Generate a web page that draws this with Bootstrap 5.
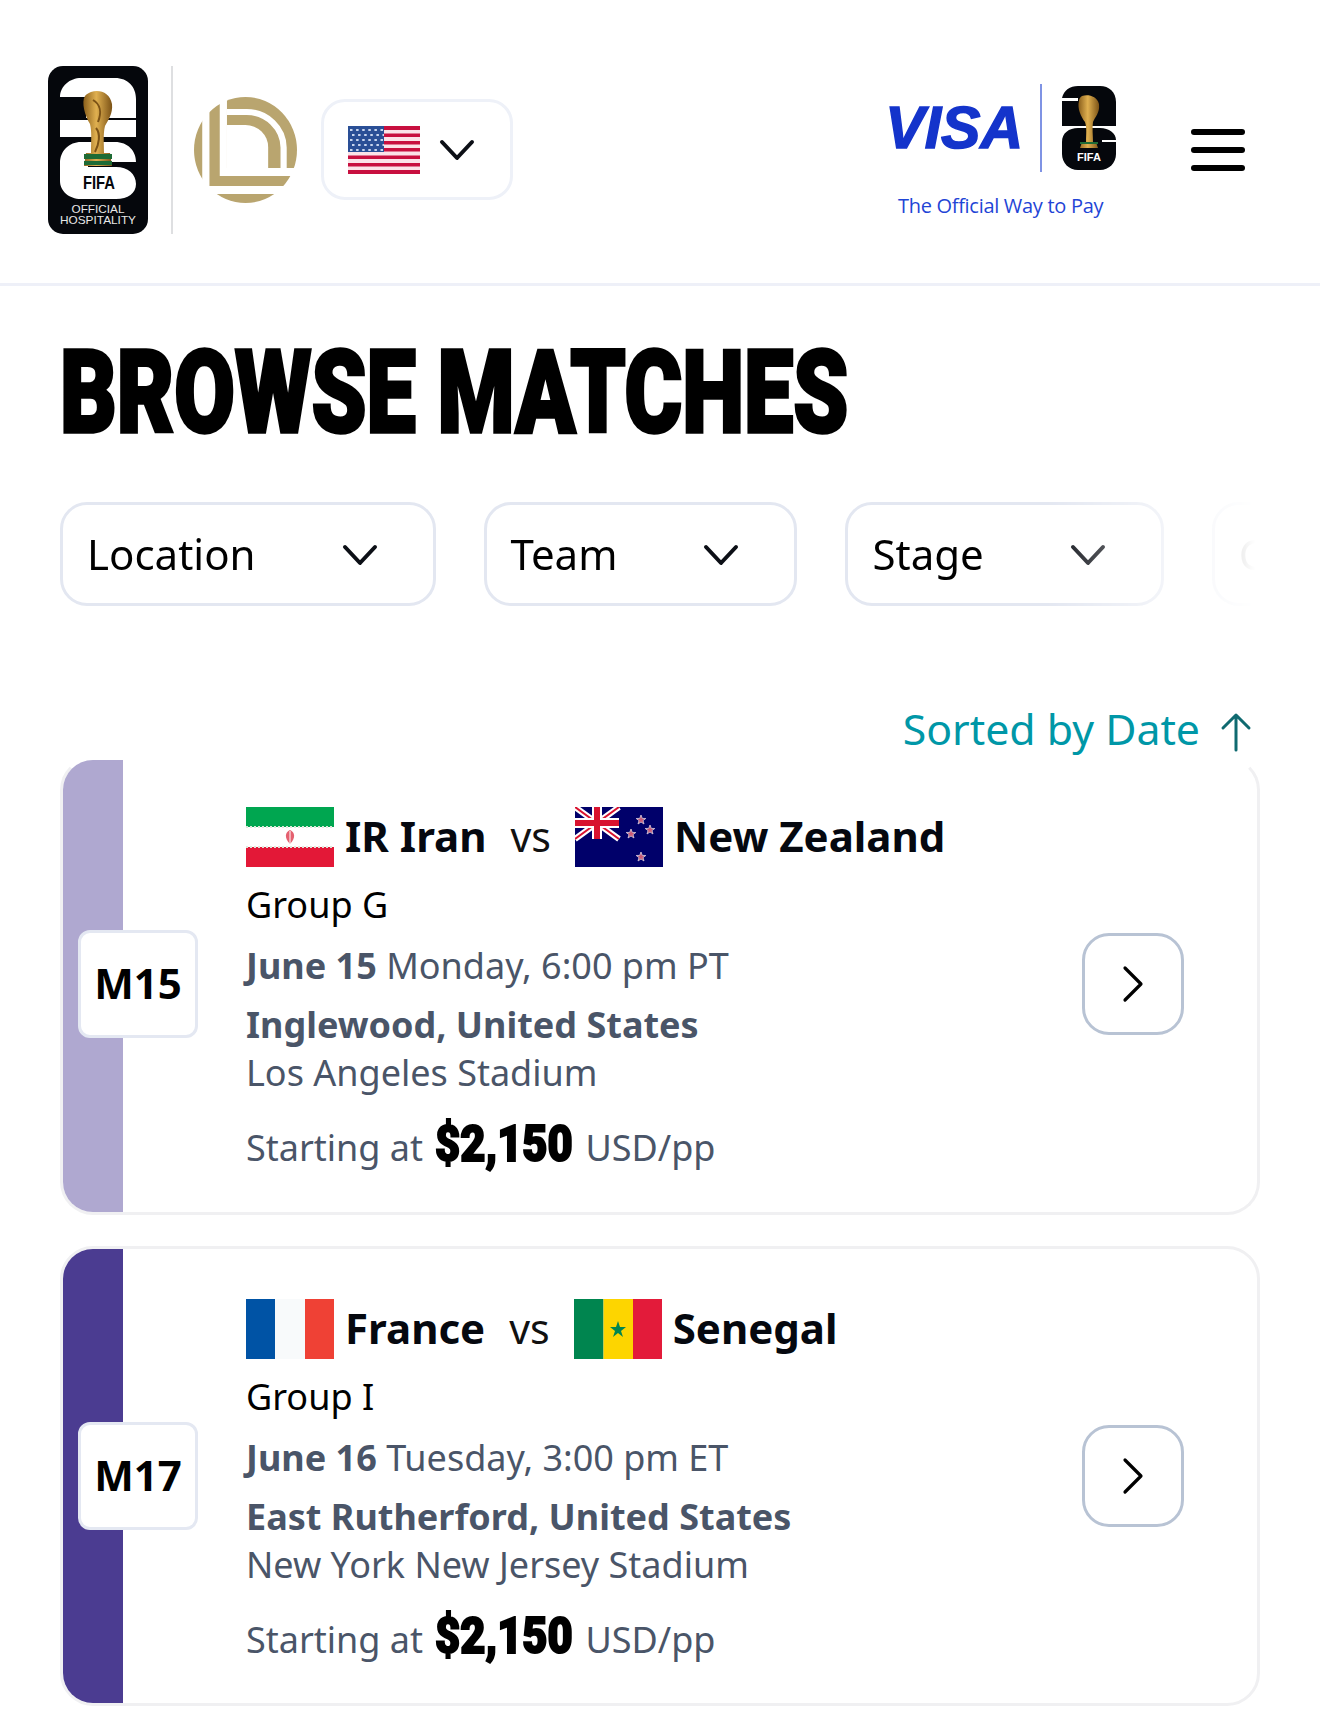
<!DOCTYPE html>
<html lang="en">
<head>
  <meta charset="UTF-8">
  <meta name="viewport" content="width=device-width, initial-scale=1.0">
  <title>Browse Matches</title>
  <link href="https://cdn.jsdelivr.net/npm/bootstrap@5.3.0/dist/css/bootstrap.min.css" rel="stylesheet">
  <style>
    body { background: #fff; color: #000; font-family: "Noto Sans", sans-serif; overflow: hidden; }
    .site-head { height: 286px; border-bottom: 3px solid #eef0f8; padding: 66px 75px 0 48px; }
    .hosp-logo { width: 100px; height: 168px; display: block; }
    .head-rule { width: 2px; height: 168px; background: #dedfe1; margin: 0 21px 0 23px; }
    .gold-logo { width: 103px; height: 106px; margin-top: 31px; display: block; }
    .lang-btn { width: 192px; height: 101px; margin: 33px 0 0 24px; border: 3px solid #eef1f8; border-radius: 24px; padding: 0 35px 0 24px; background: #fff; }
    .visa-box { width: 240px; margin-right: 69px; }
    .visa-top { height: 88px; margin-top: 18px; }
    .visa-word { font: italic 700 59px/88px "Liberation Sans", sans-serif; color: #1434cb; -webkit-text-stroke: 1.5px #1434cb; width: 158px; text-align: right; padding-right: 17px; }
    .visa-rule { width: 2px; height: 88px; background: #7f93e4; margin-right: 20px; }
    .visa-tag { font: 400 20px/24px "Open Sans", sans-serif; color: #1f45d6; letter-spacing: -.3px; margin: 22px 0 0 16px; white-space: nowrap; }
    .menu-btn { width: 54px; height: 42px; margin-top: 63px; padding: 0; border: 0; background: none; }
    .menu-btn span { display: block; height: 6px; border-radius: 3px; background: #000; }

    .page-title { margin: 49px 0 0 60px; font: 900 115px/115px Roboto, sans-serif; -webkit-text-stroke: 3.5px #000; transform: scaleX(.765); transform-origin: left; white-space: nowrap; }
    .filter-strip { margin: 52px 65px 0 20px; padding-left: 40px; overflow: hidden; -webkit-mask-image: linear-gradient(to right, transparent 0, #000 40px, #000 83%, transparent 100%); mask-image: linear-gradient(to right, transparent 0, #000 40px, #000 83%, transparent 100%); }
    .filter-btn { flex-shrink: 0; height: 104px; padding: 0 55px 2px 24px; border: 3px solid #e3e7f1; border-radius: 27px; background: #fff; font-size: 42px; color: #000; gap: 86px; }
    .filter-btn svg { margin-top: 3px; }
    .sort-row { margin: 95px 68px 0 0; height: 56px; font-size: 42.8px; line-height: 54px; color: #0097a7; gap: 20px; }
    .sort-row svg { margin-top: 5px; }

    .match-box { margin: 0 60px; border: 3px solid #f0f0f2; border-radius: 33px; overflow: hidden; position: relative; background: #fff; padding: 50px 72px 0 183px; }
    .match-box + .match-box { margin-top: 31px; }
    .match-one { border-top-color: #fff; height: 458px; padding-top: 47px; }
    .match-one .match-no, .match-one .go-btn { margin-top: -2px; }
    .match-two { height: 460px; }
    .side-bar { position: absolute; left: 0; top: 0; bottom: 0; width: 60px; }
    .bar-light { background: #afa8d0; }
    .bar-dark { background: #4b3c91; }
    .match-no { position: absolute; left: 15px; width: 120px; height: 108px; background: #fff; border: 3px solid #e4e8f2; border-radius: 12px; font-size: 42px; font-weight: 700; line-height: 100px; text-align: center; }
    .flag-art { width: 88px; height: 60px; display: block; flex-shrink: 0; }
    .team-row { height: 60px; font-size: 42px; font-weight: 700; color: #05080f; }
    .team-row .vs-word { font-size: 41px; font-weight: 400; margin: 0 24px 0 24px; color: #111; }
    .team-row b { margin: 0 0 4px 11px; font-weight: 700; }
    .group-line { margin-top: 13px; font-size: 36px; line-height: 50px; }
    .info-line { font-size: 36px; line-height: 48px; color: #4a5568; }
    .date-line { margin-top: 11px; line-height: 50px; }
    .place-line { margin-top: 10px; }
    .price-line { margin-top: 19px; line-height: 56px; }
    .price-tag { display: inline-block; font: 900 50px/56px Roboto, sans-serif; font-variant-numeric: slashed-zero; color: #000; -webkit-text-stroke: 2px #000; transform: scaleX(.87); transform-origin: left; width: 150px; margin-left: 3px; }
    .go-btn { width: 102px; height: 102px; border: 3px solid #b8c3d4; border-radius: 27px; background: #fff; position: absolute; right: 73px; padding: 0; }
  </style>
</head>
<body>

  <header class="site-head d-flex justify-content-between">
    <div class="d-flex align-items-start">
      <svg class="hosp-logo" viewBox="0 0 100 168">
        <defs>
          <linearGradient id="cupGold" x1="0" x2="1" y1="0" y2="0">
            <stop offset="0" stop-color="#8a5f1c"/><stop offset=".45" stop-color="#e0b050"/><stop offset="1" stop-color="#7b5216"/>
          </linearGradient>
          <path id="nzStar" d="M0 -5L1.300 -1.600L4.800 -1.500L2 .6L3 4L0 2L-3 4L-2 .6L-4.800 -1.500L-1.300 -1.600Z" fill="#c85a78" stroke="#d9cfe0" stroke-width=".8"/>
        </defs>
        <rect width="100" height="168" rx="15" fill="#05070c"/>
        <path d="M12 31C12 20 22 12 33 12H67C80 12 88 21 88 33V52H38V31Z" fill="#fff"/>
        <rect x="12" y="54" width="76" height="17" fill="#fff"/>
        <path d="M33 76H67C80 76 88 85 88 96H40V101H68C80 101 88 108 88 118C88 127 80 133 68 133H33C21 133 12 125 12 115V97C12 85 21 76 33 76Z" fill="#fff"/>
        <path d="M43 26C52 23 62 27 64 38C65 48 60 54 57 60C55 68 56 78 56 87H62L64 100H36L38 87H43C43 76 44 66 42 58C37 50 33 36 37 30C38 28 41 27 43 26Z" fill="url(#cupGold)"/>
        <path d="M45 34C52 38 54 46 50 56M48 62C53 68 51 78 47 86" fill="none" stroke="#7b5216" stroke-width="2"/>
        <rect x="36" y="88" width="28" height="5" fill="#1e6b35"/>
        <rect x="36" y="95" width="28" height="4" fill="#1e6b35"/>
        <text x="51" y="123" text-anchor="middle" textLength="32" lengthAdjust="spacingAndGlyphs" font-family="Liberation Sans, sans-serif" font-weight="700" font-size="19" fill="#05070c">FIFA</text>
        <text x="50" y="147" text-anchor="middle" textLength="53" lengthAdjust="spacingAndGlyphs" font-family="Liberation Sans, sans-serif" font-size="10.5" fill="#e8e8e8">OFFICIAL</text>
        <text x="50" y="157.500" text-anchor="middle" textLength="76" lengthAdjust="spacingAndGlyphs" font-family="Liberation Sans, sans-serif" font-size="10.5" fill="#e8e8e8">HOSPITALITY</text>
      </svg>
      <div class="head-rule"></div>
      <svg class="gold-logo" viewBox="0 0 100 106" preserveAspectRatio="none">
        <ellipse cx="50" cy="53" rx="50" ry="53" fill="#b9a56f"/>
        <rect x="8" y="0" width="7" height="90" fill="#fff"/>
        <rect x="25" y="0" width="7" height="71" fill="#fff"/>
        <rect x="25" y="71" width="75" height="8" fill="#fff"/>
        <rect x="0" y="89" width="100" height="8" fill="#fff"/>
        <path d="M32 15H50A36 36 0 0 1 87 52V72" fill="none" stroke="#fff" stroke-width="6"/>
        <path d="M32 28H50A22 22 0 0 1 72 50V72H32Z" fill="#fff"/>
      </svg>
      <button class="lang-btn d-flex align-items-center justify-content-between" type="button" aria-label="Language">
        <svg class="d-block" width="72" height="48" viewBox="0 0 72 48">
          <rect width="72" height="48" fill="#fbe3e8"/>
          <g fill="#c8103f"><rect width="72" height="4"/><rect y="7.500" width="72" height="3.500"/><rect y="15" width="72" height="3.500"/><rect y="22" width="72" height="3.500"/><rect y="29.500" width="72" height="3.500"/><rect y="37" width="72" height="3.500"/><rect y="44" width="72" height="4"/></g>
          <rect width="36" height="26" fill="#2a4f96"/>
          <g fill="none" stroke="#c9d6ee" stroke-width="2" stroke-dasharray="2.500 3.600"><path d="M2 4H36M4 9H36M2 14H36M4 19H36M2 24H36"/></g>
        </svg>
        <svg class="d-block" width="36" height="24" viewBox="0 0 36 24"><path d="M3 4L18 20L33 4" fill="none" stroke="#0c0f16" stroke-width="4" stroke-linecap="round" stroke-linejoin="round"/></svg>
      </button>
    </div>
    <div class="d-flex align-items-start">
      <div class="visa-box">
        <div class="visa-top d-flex align-items-center">
          <div class="visa-word">VISA</div>
          <div class="visa-rule"></div>
          <svg width="54" height="84" viewBox="0 0 54 84" class="d-block">
            <path d="M0 12C2 4 8 0 16 0H38C47 0 54 6 54 16V40H0V15H16V12ZM16 42H38C47 42 54 47 54 54H40V56H54V68C54 77 47 84 38 84H16C7 84 0 77 0 68V56C0 47 7 42 16 42Z" fill="#05070c"/>
            <path d="M20 10C26 8 35 10 37 18C38 27 33 31 31 36C30 42 31 50 31 56H34L36 62H18L20 56H24C24 48 25 42 23 36C19 31 15 22 17 15C17 13 18 11 20 10Z" fill="url(#cupGold)"/>
            <rect x="18" y="56" width="18" height="2" fill="#1e6b35"/>
            <text x="27" y="75" text-anchor="middle" textLength="24" lengthAdjust="spacingAndGlyphs" font-family="Liberation Sans, sans-serif" font-weight="700" font-size="10" fill="#fff">FIFA</text>
          </svg>
        </div>
        <div class="visa-tag">The Official Way to Pay</div>
      </div>
      <button class="menu-btn d-flex flex-column justify-content-between" type="button" aria-label="Menu"><span class="w-100"></span><span class="w-100"></span><span class="w-100"></span></button>
    </div>
  </header>

  <main>
    <h1 class="page-title">BROWSE MATCHES</h1>

    <div class="filter-strip d-flex gap-5">
      <button class="filter-btn d-flex align-items-center" type="button">Location
        <svg width="36" height="24" viewBox="0 0 36 24"><path d="M3 4L18 20L33 4" fill="none" stroke="#0c0f16" stroke-width="4" stroke-linecap="round" stroke-linejoin="round"/></svg>
      </button>
      <button class="filter-btn d-flex align-items-center" type="button">Team
        <svg width="36" height="24" viewBox="0 0 36 24"><path d="M3 4L18 20L33 4" fill="none" stroke="#0c0f16" stroke-width="4" stroke-linecap="round" stroke-linejoin="round"/></svg>
      </button>
      <button class="filter-btn d-flex align-items-center" type="button">Stage
        <svg width="36" height="24" viewBox="0 0 36 24"><path d="M3 4L18 20L33 4" fill="none" stroke="#0c0f16" stroke-width="4" stroke-linecap="round" stroke-linejoin="round"/></svg>
      </button>
      <button class="filter-btn d-flex align-items-center" type="button">Category</button>
    </div>

    <div class="sort-row d-flex justify-content-end align-items-center">
      Sorted by Date
      <svg width="32" height="40" viewBox="0 0 32 40"><path d="M16 38V3M3 16L16 3L29 16" fill="none" stroke="#0f6a70" stroke-width="3" stroke-linecap="round" stroke-linejoin="round"/></svg>
    </div>

    <article class="match-box match-one">
      <div class="side-bar bar-light"></div>
      <div class="match-no top-50 translate-middle-y">M15</div>
      <div class="team-row d-flex align-items-center">
        <svg class="flag-art" viewBox="0 0 88 60" preserveAspectRatio="none">
          <rect width="88" height="20" fill="#00a650"/><rect y="20" width="88" height="20" fill="#fff"/><rect y="40" width="88" height="20" fill="#e31837"/>
          <path d="M0 20H88M0 40H88" stroke="#dfe8dc" stroke-width="2" stroke-dasharray="2 2"/>
          <path d="M44 23C39 25 38 31 44 37C50 31 49 25 44 23Z" fill="#e4606f"/>
          <path d="M44 24V37" stroke="#fff" stroke-width="1"/>
        </svg>
        <b>IR Iran</b><span class="vs-word">vs</span>
        <svg class="flag-art" viewBox="0 0 88 60" preserveAspectRatio="none">
          <rect width="88" height="60" fill="#00006a"/>
          <path d="M0 0L44 32M44 0L0 32" stroke="#fff" stroke-width="6"/>
          <path d="M0 0L44 32M44 0L0 32" stroke="#d8132f" stroke-width="2"/>
          <path d="M22 0V32M0 16H44" stroke="#fff" stroke-width="10"/>
          <path d="M22 0V32M0 16H44" stroke="#d8132f" stroke-width="6"/>
          <use href="#nzStar" x="66" y="13"/><use href="#nzStar" x="56" y="27"/><use href="#nzStar" x="75" y="23"/><use href="#nzStar" x="66" y="50"/>
        </svg>
        <b>New Zealand</b>
      </div>
      <div class="group-line">Group G</div>
      <div class="info-line date-line"><strong>June 15</strong> Monday, 6:00 pm PT</div>
      <div class="info-line place-line fw-bold">Inglewood, United States</div>
      <div class="info-line">Los Angeles Stadium</div>
      <div class="info-line price-line">Starting at <span class="price-tag">$2,150</span>USD/pp</div>
      <button class="go-btn top-50 translate-middle-y" type="button" aria-label="Open match">
        <svg width="24" height="38" viewBox="0 0 24 38"><path d="M4 3L20 19L4 35" fill="none" stroke="#000" stroke-width="3.200" stroke-linecap="round" stroke-linejoin="round"/></svg>
      </button>
    </article>

    <article class="match-box match-two">
      <div class="side-bar bar-dark"></div>
      <div class="match-no top-50 translate-middle-y">M17</div>
      <div class="team-row d-flex align-items-center">
        <svg class="flag-art" viewBox="0 0 88 60" preserveAspectRatio="none">
          <rect width="29" height="60" fill="#0053a5"/><rect x="29" width="30" height="60" fill="#f8fafb"/><rect x="59" width="29" height="60" fill="#ef4135"/>
        </svg>
        <b>France</b><span class="vs-word">vs</span>
        <svg class="flag-art" viewBox="0 0 88 60" preserveAspectRatio="none">
          <rect width="29.500" height="60" fill="#00854f"/><rect x="29.500" width="29.500" height="60" fill="#fdd500"/><rect x="59" width="29" height="60" fill="#e31b3a"/>
          <path d="M44 22L46 28H52L47 32L49 38L44 34L39 38L41 32L36 28H42Z" fill="#00854f"/>
        </svg>
        <b>Senegal</b>
      </div>
      <div class="group-line">Group I</div>
      <div class="info-line date-line"><strong>June 16</strong> Tuesday, 3:00 pm ET</div>
      <div class="info-line place-line fw-bold">East Rutherford, United States</div>
      <div class="info-line">New York New Jersey Stadium</div>
      <div class="info-line price-line">Starting at <span class="price-tag">$2,150</span>USD/pp</div>
      <button class="go-btn top-50 translate-middle-y" type="button" aria-label="Open match">
        <svg width="24" height="38" viewBox="0 0 24 38"><path d="M4 3L20 19L4 35" fill="none" stroke="#000" stroke-width="3.200" stroke-linecap="round" stroke-linejoin="round"/></svg>
      </button>
    </article>
  </main>

</body>
</html>
